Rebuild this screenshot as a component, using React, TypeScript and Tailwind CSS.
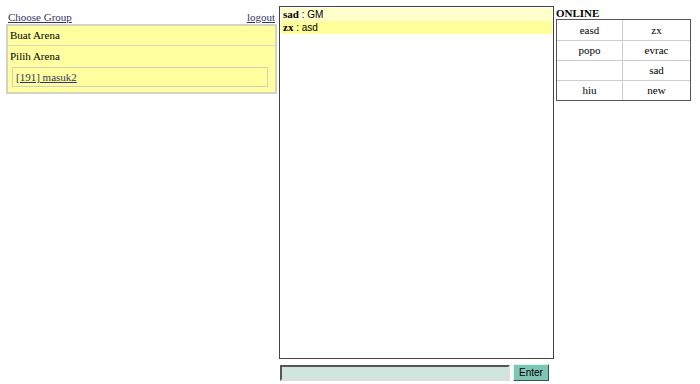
import React from "react";

const serif = { fontFamily: '"Liberation Serif", "Times New Roman", serif' };
const sans = { fontFamily: '"Liberation Sans", Arial, sans-serif' };

export default function App() {
  const online = [
    ["easd", "zx"],
    ["popo", "evrac"],
    ["", "sad"],
    ["hiu", "new"],
  ];
  return (
    <div className="w-[700px] h-[384px] bg-white flex pl-[6px] pt-[6px] text-black" style={serif}>
      <div className="w-[271px] flex flex-col" style={serif}>
        <div className="h-[18px] flex justify-between items-start text-[11px] leading-[13px] pt-[5px] pl-[2px] pr-[2px]">
          <a href="#" className="underline text-[#333366]">Choose Group</a>
          <a href="#" className="underline text-[#333366]">logout</a>
        </div>
        <div className="bg-[#ffffa0] border-2 border-[#d4d4c4] flex flex-col text-[11px] leading-[13px]">
          <div className="h-[20px] flex items-center pl-[2px] border-b border-[#d8d8b8]" style={serif}>Buat Arena</div>
          <div className="h-[21px] flex items-center pl-[2px]" style={serif}>Pilih Arena</div>
          <div className="ml-[4px] mr-[7px] h-[20px] border border-[#d0d0c0] flex items-center pl-[3px]">
            <a href="#" className="underline text-[#333366]" style={serif}>[191] masuk2</a>
          </div>
          <div className="h-[5px]" />
        </div>
      </div>
      <div className="w-[275px] ml-[2px] flex flex-col">
        <div className="h-[353px] border border-[#444] p-[1px] flex flex-col text-[10px] leading-[13px]">
          <div className="h-[13px] bg-[#ffffcc] pl-[2px] flex items-center">
            <b style={serif} className="text-[11px]">sad</b><span style={sans}>&nbsp;: GM</span>
          </div>
          <div className="h-[13px] bg-[#ffff99] pl-[2px] flex items-center">
            <b style={serif} className="text-[11px]">zx</b><span style={sans}>&nbsp;: asd</span>
          </div>
        </div>
        <div className="flex items-center mt-[5px] pl-[1px] gap-[3px]">
          <input className="w-[230px] h-[16px] bg-[#cfe5de] border-2 border-t-[#555] border-l-[#555] border-r-[#ddd] border-b-[#ddd] outline-none" />
          <button className="w-[36px] h-[17px] bg-[#80c4b4] text-[10px] leading-[13px] border border-t-[#cfe] border-l-[#cfe] border-r-[#355] border-b-[#355]" style={sans}>Enter</button>
        </div>
      </div>
      <div className="w-[135px] ml-[2px] flex flex-col" style={serif}>
        <div className="font-bold text-[11px] leading-[13px] h-[13px] pt-[1px]">ONLINE</div>
        <div className="border border-[#555] flex flex-col text-[11px]">
          {online.map((r, i) => (
            <div key={i} className={"flex h-[20px] " + (i > 0 ? "border-t border-[#ccc]" : "")}>
              <div className="w-[66px] border-r border-[#ccc] flex items-center justify-center">{r[0]}</div>
              <div className="flex-1 flex items-center justify-center">{r[1]}</div>
            </div>
          ))}
        </div>
      </div>
    </div>
  );
}
